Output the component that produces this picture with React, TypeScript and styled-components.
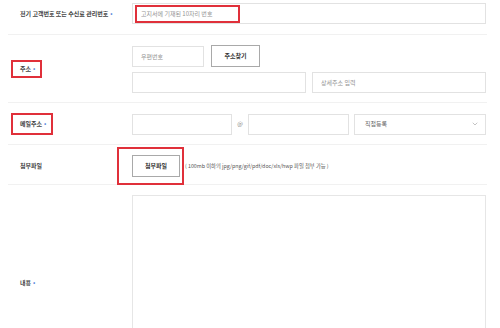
import React from 'react';
import styled, { createGlobalStyle } from 'styled-components';
import { ChevronDown } from 'lucide-react';

const GlobalStyle = createGlobalStyle`
  html, body {
    margin: 0;
    padding: 0;
    background: #fff;
    overflow: hidden;
  }
  body {
    font-family: 'Noto Sans CJK KR', 'Noto Sans', sans-serif;
    color: #333;
  }
  * {
    box-sizing: border-box;
  }
`;

const Form = styled.div`
  width: 479px;
  margin-left: 8px;
`;

const Row = styled.div<{ $pt: number; $pb: number; $last?: boolean }>`
  display: flex;
  align-items: center;
  padding: ${(p) => p.$pt}px 1px ${(p) => p.$pb}px 0;
  border-bottom: ${(p) => (p.$last ? 'none' : '1px solid #f1f1f1')};
`;

const Label = styled.div`
  width: 124px;
  flex-shrink: 0;
  padding-left: 12px;
  font-size: 6px;
  line-height: 8px;
  font-weight: 700;
  color: #444;
  white-space: nowrap;
`;

const LabelText = styled.span<{ $boxed?: boolean; $pv?: number }>`
  display: inline-block;
  ${(p) =>
    p.$boxed
      ? `
    margin-left: -9px;
    border: 2px solid #e0303a;
    padding: ${p.$pv ?? 3}px 5px ${p.$pv ?? 3}px 7px;
  `
      : ''}
`;

const Req = styled.span`
  color: #4a7bd8;
  margin-left: 2px;
`;

const Field = styled.div`
  flex: 1;
  display: flex;
  flex-direction: column;
  gap: 5px;
`;

const Line = styled.div<{ $gap?: number }>`
  display: flex;
  align-items: center;
  gap: ${(p) => p.$gap ?? 6}px;
  line-height: 0;
`;

const Input = styled.input<{ $w?: number }>`
  height: 21px;
  ${(p) => (p.$w ? `width: ${p.$w}px; flex-shrink: 0;` : 'flex: 1; min-width: 0;')}
  border: 1px solid #e2e2e2;
  background: #fff;
  padding: 0 8px;
  margin: 0;
  font-family: inherit;
  font-size: 6px;
  color: #333;
  outline: none;
  &::placeholder {
    color: #949494;
  }
`;

const Marked = styled.div<{ $t: number; $r: number; $b: number; $l: number }>`
  position: relative;
  display: flex;
  &::after {
    content: '';
    position: absolute;
    top: ${(p) => p.$t}px;
    right: ${(p) => p.$r}px;
    bottom: ${(p) => p.$b}px;
    left: ${(p) => p.$l}px;
    border: 2px solid #e0303a;
    pointer-events: none;
  }
`;

const Button = styled.button<{ $w: number; $ml?: number }>`
  width: ${(p) => p.$w}px;
  height: 22px;
  flex-shrink: 0;
  margin: 0 0 0 ${(p) => p.$ml ?? 0}px;
  background: #fff;
  border: 1px solid #a9a9a9;
  font-family: inherit;
  font-size: 6px;
  line-height: 8px;
  font-weight: 700;
  color: #333;
  padding: 0;
`;

const At = styled.span`
  width: 16px;
  text-align: center;
  font-size: 6px;
  line-height: 8px;
  color: #888;
  flex-shrink: 0;
`;

const SelectBox = styled.div`
  width: 132px;
  height: 21px;
  flex-shrink: 0;
  margin-left: 5px;
  border: 1px solid #e2e2e2;
  display: flex;
  align-items: center;
  justify-content: space-between;
  padding: 0 6px 0 10px;
  font-size: 6px;
  line-height: 8px;
  color: #666;
`;

const Note = styled.span`
  font-size: 5.3px;
  line-height: 8px;
  color: #555;
  white-space: nowrap;
  margin-left: 5px;
`;

const TextArea = styled.textarea`
  width: 100%;
  height: 176px;
  margin: 0;
  border: 1px solid #e6e6e6;
  resize: none;
  outline: none;
  font-family: inherit;
  font-size: 6px;
  display: block;
`;

export default function App() {
  return (
    <>
      <GlobalStyle />
      <Form>
        <Row $pt={3} $pb={10}>
          <Label>
            전기 고객번호 또는 수신료 관리번호<Req>•</Req>
          </Label>
          <Field>
            <Marked $t={2} $r={246} $b={1} $l={3}>
              <Input placeholder="고지서에 기재된 10자리 번호" />
            </Marked>
          </Field>
        </Row>

        <Row $pt={10} $pb={9}>
          <Label>
            <LabelText $boxed $pv={3}>
              주소<Req>•</Req>
            </LabelText>
          </Label>
          <Field>
            <Line>
              <Input $w={72} placeholder="우편번호" />
              <Button $w={49} $ml={1}>주소찾기</Button>
            </Line>
            <Line>
              <Input />
              <Input placeholder="상세주소 입력" />
            </Line>
          </Field>
        </Row>

        <Row $pt={10} $pb={9}>
          <Label>
            <LabelText $boxed $pv={5}>
              메일주소<Req>•</Req>
            </LabelText>
          </Label>
          <Field>
            <Line $gap={0}>
              <Input $w={100} />
              <At>@</At>
              <Input />
              <SelectBox>
                직접등록
                <ChevronDown size={8} strokeWidth={1.5} color="#888" />
              </SelectBox>
            </Line>
          </Field>
        </Row>

        <Row $pt={10} $pb={7}>
          <Label>첨부파일</Label>
          <Field>
            <Line $gap={0}>
              <Marked $t={-8} $r={-4} $b={-8} $l={-15}>
                <Button $w={48}>첨부파일</Button>
              </Marked>
              <Note>( 100mb 이하의 jpg/png/gif/pdf/doc/xls/hwp 파일 첨부 가능 )</Note>
            </Line>
          </Field>
        </Row>

        <Row $pt={10} $pb={0} $last>
          <Label>
            내용<Req>•</Req>
          </Label>
          <Field>
            <TextArea />
          </Field>
        </Row>
      </Form>
    </>
  );
}
